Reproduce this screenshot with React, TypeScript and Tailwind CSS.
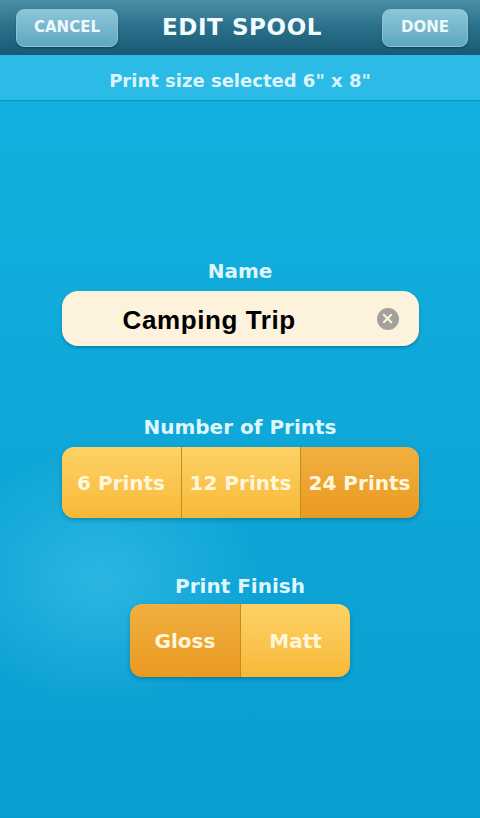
import { useState } from 'react';

const labelFont = "font-['DejaVu_Sans',sans-serif]";

function Segmented({
  options,
  value,
  onChange,
  itemClass,
}: {
  options: string[];
  value: string;
  onChange: (v: string) => void;
  itemClass: string;
}) {
  return (
    <div className="flex overflow-hidden rounded-xl shadow-[0_2px_4px_rgba(0,60,100,0.35)]">
      {options.map((opt, i) => {
        const active = opt === value;
        return (
          <button
            key={opt}
            type="button"
            onClick={() => onChange(opt)}
            className={`${itemClass} flex items-center justify-center whitespace-nowrap ${labelFont} font-bold text-[#fff6dc] ${
              i > 0 ? 'border-l border-[#c98a1c]' : ''
            } ${
              active
                ? 'bg-gradient-to-b from-[#f0b040] to-[#ea9a1e]'
                : 'bg-gradient-to-b from-[#fdd266] to-[#f7b935]'
            }`}
          >
            {opt}
          </button>
        );
      })}
    </div>
  );
}

export default function App() {
  const [name, setName] = useState('Camping Trip');
  const [prints, setPrints] = useState('24 Prints');
  const [finish, setFinish] = useState('Gloss');

  const headerButton = `flex h-[38px] items-center justify-center rounded-lg border border-[#8ec3d6] bg-gradient-to-b from-[#8cc6da] to-[#5ea7c2] ${labelFont} text-[15px] font-bold text-[#eef9fc] shadow-[0_1px_2px_rgba(0,0,0,0.3)]`;

  return (
    <div className="relative flex h-[818px] w-[480px] flex-col overflow-hidden bg-gradient-to-b from-[#13b3e0] to-[#0a9dd0]">
      {/* soft glow behind the options */}
      <div className="pointer-events-none absolute left-[-60px] top-[450px] h-[260px] w-[320px] rounded-full bg-[radial-gradient(closest-side,rgba(90,210,245,0.4),rgba(90,210,245,0))]" />

      {/* Header */}
      <div className="relative flex h-[55px] items-center bg-gradient-to-b from-[#4a8ea6] via-[#2a6f89] to-[#175a75] pl-4 pr-3 shadow-[0_1px_2px_rgba(0,0,0,0.3)]">
        <div className="flex flex-1 justify-start">
          <button type="button" className={`${headerButton} w-[102px]`}>
            CANCEL
          </button>
        </div>
        <h1 className={`${labelFont} text-[23px] font-bold tracking-wide text-[#f2fbff]`}>EDIT SPOOL</h1>
        <div className="flex flex-1 justify-end">
          <button type="button" className={`${headerButton} w-[86px]`}>
            DONE
          </button>
        </div>
      </div>

      {/* Sub header */}
      <div className="relative flex h-[45px] items-center justify-center bg-[#2bbbe6] pt-[6px] shadow-[0_1px_1px_rgba(0,80,120,0.25)]">
        <p className={`${labelFont} text-[18px] font-bold text-[#dcf5fc]`}>Print size selected 6" x 8"</p>
      </div>

      <div className="relative flex flex-col items-center pt-[159px]">
        {/* Name */}
        <p className={`h-[24px] ${labelFont} text-[20px] font-bold leading-[24px] text-[#dff6fc]`}>Name</p>
        <div className="mt-[8px] flex h-[55px] w-[357px] items-center rounded-2xl bg-[#fdf2db] pl-[61px] pr-[20px] pt-[3px] shadow-[0_2px_3px_rgba(0,60,100,0.35)]">
          <input
            value={name}
            onChange={(e) => setName(e.target.value)}
            className="min-w-0 flex-1 bg-transparent font-['Liberation_Sans',sans-serif] text-[26px] font-bold tracking-[0.6px] text-black outline-none"
          />
          <button
            type="button"
            onClick={() => setName('')}
            className="-mt-[3px] flex h-[22px] w-[22px] items-center justify-center rounded-full bg-[#a3a19c]"
          >
            <svg className="h-[11px] w-[11px]" viewBox="0 0 12 12" fill="none" stroke="#fdf2db" strokeWidth={2.4} strokeLinecap="round">
              <path d="M2 2l8 8M10 2l-8 8" />
            </svg>
          </button>
        </div>

        {/* Number of prints */}
        <p className={`mt-[69px] h-[24px] ${labelFont} text-[20px] font-bold leading-[24px] text-[#dff6fc]`}>Number of Prints</p>
        <div className="mt-[8px]">
          <Segmented
            options={['6 Prints', '12 Prints', '24 Prints']}
            value={prints}
            onChange={setPrints}
            itemClass="h-[71px] w-[119px] text-[20px]"
          />
        </div>

        {/* Print finish */}
        <p className={`mt-[56px] h-[24px] ${labelFont} text-[20px] font-bold leading-[24px] text-[#dff6fc]`}>Print Finish</p>
        <div className="mt-[6px]">
          <Segmented
            options={['Gloss', 'Matt']}
            value={finish}
            onChange={setFinish}
            itemClass="h-[73px] w-[110px] text-[20px]"
          />
        </div>
      </div>
    </div>
  );
}
